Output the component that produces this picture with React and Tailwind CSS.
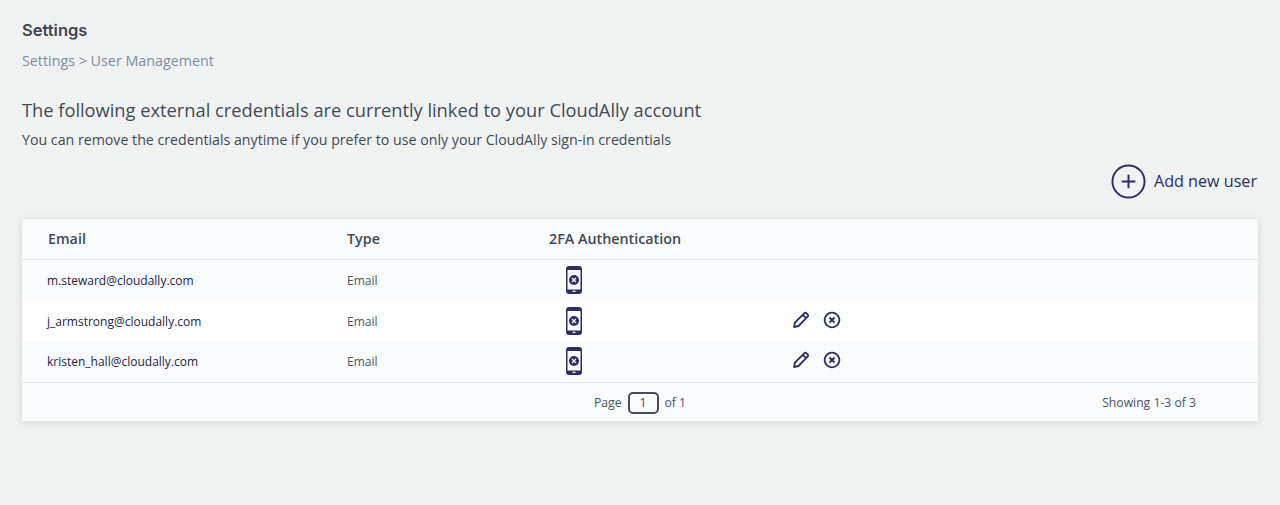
const users = [
  { email: "m.steward@cloudally.com", actions: false, bg: "bg-[#fafbfd]", height: "h-[41px]" },
  { email: "j_armstrong@cloudally.com", actions: true, bg: "bg-white", height: "h-[41px]" },
  { email: "kristen_hall@cloudally.com", actions: true, bg: "bg-[#fafbfd]", height: "h-[40px]" },
];

function PhoneX() {
  return (
    <svg width="16" height="28" viewBox="0 0 16 28" fill="none">
      <rect x="0.75" y="0.75" width="14.5" height="26.5" rx="2.5" stroke="#2b2d63" strokeWidth="1.5" />
      <path d="M1 4h14V3a2 2 0 0 0-2-2H3a2 2 0 0 0-2 2zM1 23.5h14V25a2 2 0 0 1-2 2H3a2 2 0 0 1-2-2z" fill="#2b2d63" />
      <circle cx="8" cy="14" r="5" fill="#2b2d63" />
      <path d="M6 12l4 4M10 12l-4 4" stroke="#fff" strokeWidth="1.3" />
      <rect x="6.5" y="24.7" width="3" height="1.2" fill="#fff" />
    </svg>
  );
}

function Pencil() {
  return (
    <svg width="18" height="18" viewBox="0 0 18 18" fill="none" stroke="#2b2d63" strokeWidth="1.8" strokeLinejoin="round">
      <path d="M2 16l1-4.5L12.2 2.3a1.7 1.7 0 0 1 2.4 0l1 1a1.7 1.7 0 0 1 0 2.4L6.5 15z" />
      <path d="M10.8 3.8l3.4 3.4" />
    </svg>
  );
}

function CircleX() {
  return (
    <svg width="18" height="18" viewBox="0 0 18 18" fill="none" stroke="#2b2d63">
      <circle cx="9" cy="9" r="7.4" strokeWidth="1.8" />
      <path d="M6.5 6.5l5 5M11.5 6.5l-5 5" strokeWidth="2" />
    </svg>
  );
}

export default function App() {
  return (
    <div className="min-h-[505px] bg-[#f1f3f3] px-[22px] pt-[21px] font-['Open_Sans',sans-serif]">
      <h1 className="font-['Inter',sans-serif] text-[16.5px] leading-[18px] font-semibold text-[#3d4650]">Settings</h1>
      <p className="mt-[12px] text-[14.3px] leading-[19px] text-[#7c8ea3]">Settings &gt; User Management</p>
      <h2 className="mt-[27px] text-[18.27px] leading-[25px] text-[#3f4a56]">
        The following external credentials are currently linked to your CloudAlly account
      </h2>
      <p className="mt-[8px] text-[14.2px] leading-[19px] text-[#3f4a56]">
        You can remove the credentials anytime if you prefer to use only your CloudAlly sign-in credentials
      </p>

      <div className="mt-[14px] flex h-[36px] items-center justify-end">
        <svg width="35" height="35" viewBox="0 0 36 36" fill="none" stroke="#2b2d63" strokeWidth="2">
          <circle cx="18" cy="18" r="16.5" />
          <path d="M18 11v14M11 18h14" />
        </svg>
        <span className="ml-[8px] mr-[1px] text-[16.15px] leading-[22px] text-[#2b2d63]">Add new user</span>
      </div>

      <div className="mt-[20px] bg-white shadow-[0_1px_8px_rgba(0,0,0,0.12)]">
        <div className="grid h-[41px] grid-cols-[299px_202px_1fr] items-center border-b border-[#e2e5e9] bg-[#fafbfd] pl-[26px] text-[14.3px] font-semibold text-[#3f4a56]">
          <span>Email</span>
          <span>Type</span>
          <span>2FA Authentication</span>
        </div>
        {users.map((user) => (
          <div
            key={user.email}
            className={`grid grid-cols-[300px_202px_243px_1fr] items-center pl-[25px] text-[12px] ${user.height} ${user.bg}`}
          >
            <span className="text-[#1f2440]">{user.email}</span>
            <span className="text-[#4a5561]">Email</span>
            <span className="pb-[2px] pl-[17px]">
              <span className="flex"><PhoneX /></span>
            </span>
            {user.actions && (
              <span className="flex items-center gap-[13px] pb-[4px]">
                <Pencil />
                <CircleX />
              </span>
            )}
          </div>
        ))}
        <div className="grid h-[39px] grid-cols-[1fr_auto_1fr] items-center border-t border-[#e2e5e9] bg-[#fafbfd] text-[12.2px] text-[#4a5561]">
          <span />
          <span className="flex items-center pt-[2px]">
            Page
            <span className="mx-[6px] flex h-[22px] w-[31px] items-center justify-center rounded-[5px] border-2 border-[#4a4d55] text-[#3f4a56]">1</span>
            of 1
          </span>
          <span className="pr-[62px] pt-[3px] text-right">Showing 1-3 of 3</span>
        </div>
      </div>
    </div>
  );
}
